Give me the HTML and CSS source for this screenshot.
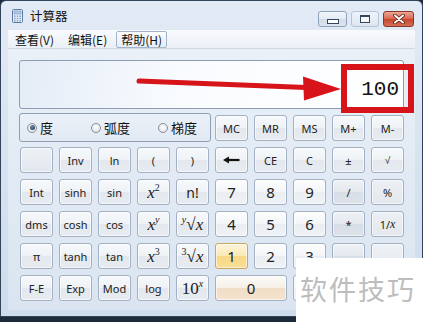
FILE: index.html
```html
<!DOCTYPE html>
<html lang="zh">
<head>
<meta charset="utf-8">
<title>计算器</title>
<link rel="stylesheet" href="styles.css">
</head>
<body>
<div class="window">
  <div class="titlebar">
    <svg class="app-icon" width="11" height="14" viewBox="0 0 11 14">
      <rect x="0.5" y="0.5" width="10" height="13" rx="1" fill="#e9f1fb" stroke="#5b7aa3"/>
      <rect x="2" y="2" width="7" height="3" fill="#b9cde6" stroke="#6f8db4" stroke-width="0.6"/>
      <g fill="#7f9cc2">
        <rect x="2" y="6.5" width="1.6" height="1.4"/><rect x="4.7" y="6.5" width="1.6" height="1.4"/><rect x="7.4" y="6.5" width="1.6" height="1.4"/>
        <rect x="2" y="8.8" width="1.6" height="1.4"/><rect x="4.7" y="8.8" width="1.6" height="1.4"/><rect x="7.4" y="8.8" width="1.6" height="1.4"/>
        <rect x="2" y="11.1" width="1.6" height="1.4"/><rect x="4.7" y="11.1" width="1.6" height="1.4"/><rect x="7.4" y="11.1" width="1.6" height="1.4"/>
      </g>
    </svg>
    <span class="title">计算器</span>
    <div class="controls">
      <div class="cbtn min"><span class="g-min"></span></div>
      <div class="cbtn max"><span class="g-max"></span></div>
      <div class="cbtn close">
        <svg width="12" height="10" viewBox="0 0 12 10">
          <path d="M2 1.5 L10 8.5 M10 1.5 L2 8.5" stroke="#5a1a10" stroke-width="3.6" stroke-linecap="round"/>
          <path d="M2 1.5 L10 8.5 M10 1.5 L2 8.5" stroke="#ffffff" stroke-width="2" stroke-linecap="round"/>
        </svg>
      </div>
    </div>
  </div>
  <div class="client">
    <div class="menubar">
      <span class="menu">查看(V)</span>
      <span class="menu">编辑(E)</span>
      <span class="menu hover">帮助(H)</span>
    </div>
    <div class="calc">
      <div class="display"><span class="value">100</span></div>
      <div class="keys">
        <div class="angle">
          <label class="radio"><span class="dot on"></span>度</label>
          <label class="radio"><span class="dot"></span>弧度</label>
          <label class="radio"><span class="dot"></span>梯度</label>
        </div>
        <div class="k">MC</div><div class="k">MR</div><div class="k">MS</div><div class="k">M+</div><div class="k">M-</div>

        <div class="k blank"></div><div class="k">Inv</div><div class="k">ln</div><div class="k">(</div><div class="k">)</div>
        <div class="k"><svg width="17" height="8" viewBox="0 0 17 8"><path d="M4 4 H16.5" stroke="#111" stroke-width="2.2"/><path d="M0 4 L6 0.5 L6 7.5 Z" fill="#111"/></svg></div>
        <div class="k">CE</div><div class="k">C</div><div class="k">±</div><div class="k small">√</div>

        <div class="k">Int</div><div class="k">sinh</div><div class="k">sin</div>
        <div class="k"><span class="m"><i>x</i><sup>2</sup></span></div>
        <div class="k big">n!</div>
        <div class="k num">7</div><div class="k num">8</div><div class="k num">9</div><div class="k op">/</div><div class="k op2">%</div>

        <div class="k">dms</div><div class="k">cosh</div><div class="k">cos</div>
        <div class="k"><span class="m"><i>x</i><sup><i>y</i></sup></span></div>
        <div class="k"><span class="m"><sup><i>y</i></sup>√<i>x</i></span></div>
        <div class="k num">4</div><div class="k num">5</div><div class="k num">6</div><div class="k op">*</div><div class="k op2">1/<i class="ix">x</i></div>

        <div class="k">π</div><div class="k">tanh</div><div class="k">tan</div>
        <div class="k"><span class="m"><i>x</i><sup>3</sup></span></div>
        <div class="k"><span class="m"><sup>3</sup>√<i>x</i></span></div>
        <div class="k num hot">1</div><div class="k num">2</div><div class="k num">3</div><div class="k op">-</div>
        <div class="k op eq">=</div>

        <div class="k">F-E</div><div class="k">Exp</div><div class="k">Mod</div><div class="k">log</div>
        <div class="k"><span class="m">10<sup><i>x</i></sup></span></div>
        <div class="k num zero">0</div><div class="k num">.</div><div class="k op">+</div>
      </div>
    </div>
  </div>
</div>

<svg class="arrow" width="423" height="322" viewBox="0 0 423 322">
  <path d="M139 81 L306 87.5" stroke="#d7141a" stroke-width="5" stroke-linecap="round"/>
  <path d="M303 76.5 L341 89 L304 100.5 Z" fill="#d7141a"/>
</svg>
<div class="mark"></div>
<div class="wm">软件技巧</div>
</body>
</html>
```

FILE: styles.css
```css
* { box-sizing: border-box; }
html, body { margin: 0; padding: 0; }
body {
  width: 423px;
  height: 322px;
  overflow: hidden;
  position: relative;
  background: #1d2a3a;
  font-family: "Noto Sans", "Noto Sans CJK SC", sans-serif;
  color: #1b1b1b;
}

.window {
  width: 423px;
  height: 317px;
  border: 1px solid #33455b;
  border-radius: 6px 6px 0 0;
  background: linear-gradient(#e2eaf5, #cedcec);
  display: flex;
  flex-direction: column;
}

.titlebar {
  height: 29px;
  flex: none;
  display: flex;
  align-items: center;
  padding-left: 11px;
}
.app-icon { display: block; flex: none; }
.title {
  margin-left: 7px;
  font-family: "Noto Sans CJK SC", sans-serif;
  font-size: 12.5px;
  color: #111;
}
.controls {
  margin-left: auto;
  margin-right: 8px;
  align-self: flex-start;
  margin-top: 10px;
  display: flex;
  gap: 4px;
}
.cbtn {
  height: 16px;
  border-radius: 3px;
  display: flex;
  align-items: center;
  justify-content: center;
}
.cbtn.min {
  width: 29px;
  border: 1px solid #8da2bd;
  background: linear-gradient(#f4f7fb, #e2eaf3 50%, #d3deea 51%, #dbe4ef);
}
.cbtn.max {
  width: 28px;
  border: 1px solid #b5c5d8;
  background: linear-gradient(#eef3f9, #dde6f0);
}
.cbtn.close {
  width: 31px;
  border: 1px solid #8a3526;
  background: linear-gradient(#eca796, #d9644d 50%, #c6442e 51%, #d56f55);
}
.g-min {
  width: 12px;
  height: 5px;
  margin-top: 4px;
  background: #fff;
  border: 1px solid #34465c;
}
.g-max {
  width: 10px;
  height: 8px;
  background: #f4f7fb;
  border: 1px solid #34465c;
  border-top-width: 2px;
}

.client {
  flex: 1;
  margin: 0 7px 6px;
  display: flex;
  flex-direction: column;
  min-height: 0;
}

.menubar {
  height: 19px;
  flex: none;
  display: flex;
  align-items: center;
  gap: 4px;
  padding-left: 2px;
  background: linear-gradient(#f8fafd, #eaf0f7);
  border-bottom: 1px solid #cfd9e6;
  font-family: "Noto Sans CJK SC", sans-serif;
  font-size: 12px;
  color: #111;
}
.menu {
  height: 17px;
  line-height: 15px;
  padding: 0 4px;
  border: 1px solid transparent;
  border-radius: 2px;
}
.menu.hover {
  border-color: #a3b5cc;
  background: linear-gradient(#fbfcfe, #e6edf6);
}

.calc {
  flex: 1;
  padding: 11px 11px 0;
  background: linear-gradient(#e9f0f8, #dae5f1);
  display: flex;
  flex-direction: column;
  gap: 6px;
}

.display {
  height: 49px;
  flex: none;
  border: 1px solid #8b9cb3;
  border-radius: 3px;
  background: linear-gradient(100deg, #e4ecf7, #f8fbfe 40%, #ffffff);
  display: flex;
  justify-content: flex-end;
  padding: 17px 4px 0 0;
  font-family: "Liberation Mono", monospace;
  font-size: 21px;
  line-height: 24px;
  color: #111;
}

.keys {
  display: grid;
  grid-template-columns: repeat(10, 33px);
  grid-auto-rows: 26px;
  gap: 6px;
  margin-left: 1px;
}

.angle {
  grid-column: span 5;
  margin: -2px -2px -1px -1px;
  border: 1px solid #8e9fb5;
  border-radius: 3px;
  background: linear-gradient(#ebf1f8, #e1e9f3);
  display: grid;
  grid-template-columns: 64px 67px auto;
  align-items: center;
  padding-left: 7px;
  font-family: "Noto Sans CJK SC", sans-serif;
  font-size: 13px;
  color: #111;
}
.radio {
  display: flex;
  align-items: center;
  gap: 3px;
}
.dot {
  width: 10px;
  height: 10px;
  border-radius: 50%;
  border: 1px solid #8b9096;
  background: radial-gradient(circle at 50% 40%, #ffffff, #d5dae1);
  display: flex;
  align-items: center;
  justify-content: center;
}
.dot.on::after {
  content: "";
  width: 5px;
  height: 5px;
  border-radius: 50%;
  background: radial-gradient(circle at 40% 35%, #6c8ab0, #1c2f4a);
}

.k {
  border: 1px solid #a3b1c4;
  border-radius: 3px;
  background: linear-gradient(#f7f9fb, #eef2f6 50%, #e3e8ee 51%, #e8ecf1);
  box-shadow: inset 0 0 0 1px rgba(255, 255, 255, 0.55);
  display: flex;
  align-items: center;
  justify-content: center;
  font-size: 11px;
  color: #222;
}
.k.small { font-size: 10px; font-family: "Liberation Sans", sans-serif; }
.k.blank { background: linear-gradient(#eef2f6, #e2e7ee); }
.k.big { font-size: 14px; }
.k.num {
  background: linear-gradient(#fdfdfe, #f3f5f8 50%, #eaeef3 51%, #eff2f6);
  font-size: 15px;
}
.k.op {
  background: linear-gradient(#eef1f5, #e4e8ee 50%, #d8dee6 51%, #dee3ea);
}
.k.op2 {
  background: linear-gradient(#eceff3, #e4e7ec);
}
.k.eq { grid-row: span 2; }
.k.zero {
  grid-column: span 2;
  background: linear-gradient(#fcfbfa, #f6efe6 50%, #f2ddc6 51%, #f4e3cf);
}
.k.hot {
  border-color: #c8a85c;
  background: linear-gradient(#fdf5dc, #fbe8b2 50%, #f8d886 51%, #f9de98);
}
.ix { font-family: "Liberation Serif", serif; font-size: 12px; }

.m {
  font-family: "Liberation Serif", serif;
  font-size: 17px;
  line-height: 1;
}
.m sup {
  font-size: 10px;
  line-height: 0;
  vertical-align: 7px;
}

.arrow {
  position: absolute;
  left: 0;
  top: 0;
  pointer-events: none;
}
.mark {
  position: absolute;
  left: 341px;
  top: 64px;
  width: 73px;
  height: 49px;
  border: 6px solid #d7141a;
}
.wm {
  position: absolute;
  left: 296px;
  top: 258px;
  right: 0;
  bottom: 0;
  background: #ffffff;
  padding: 17px 0 0 4px;
  font-family: "Noto Sans CJK SC", sans-serif;
  font-size: 27px;
  line-height: 1;
  letter-spacing: 2px;
  color: #bdbdbd;
  white-space: nowrap;
}
```
